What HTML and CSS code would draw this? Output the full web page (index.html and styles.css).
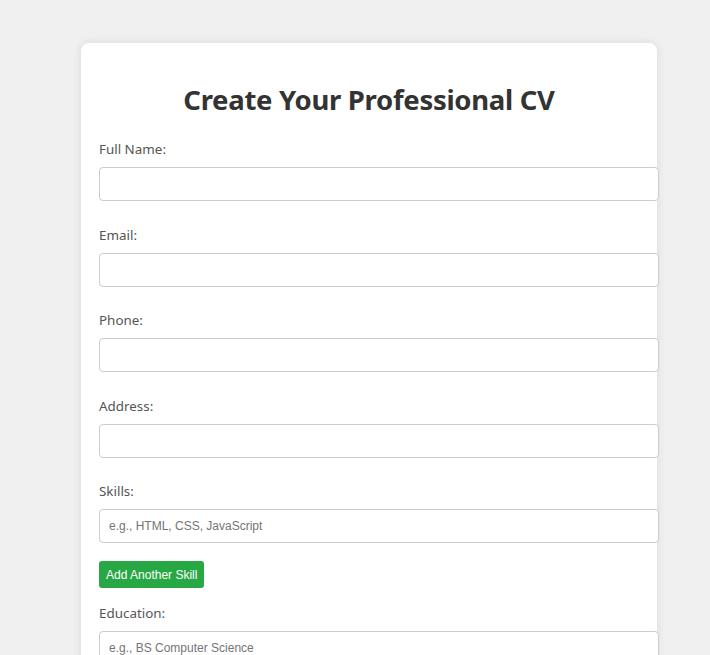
FILE: index.html
```html
<!DOCTYPE html>
<html>
<head>
<meta charset="utf-8">
<link rel="stylesheet" href="styles.css">
</head>
<body>
<div class="card">
  <h1 class="title">Create Your Professional CV</h1>
  <form class="form">
    <div class="field">
      <label class="label">Full Name:</label>
      <input class="input" type="text">
    </div>
    <div class="field">
      <label class="label">Email:</label>
      <input class="input" type="text">
    </div>
    <div class="field">
      <label class="label">Phone:</label>
      <input class="input" type="text">
    </div>
    <div class="field">
      <label class="label">Address:</label>
      <input class="input" type="text">
    </div>
    <div class="field field-tight">
      <label class="label">Skills:</label>
      <input class="input" type="text" placeholder="e.g., HTML, CSS, JavaScript">
    </div>
    <button class="btn" type="button">Add Another Skill</button>
    <div class="field">
      <label class="label">Education:</label>
      <input class="input" type="text" placeholder="e.g., BS Computer Science">
    </div>
  </form>
</div>
</body>
</html>
```
FILE: styles.css
```css
html, body {
  margin: 0;
  padding: 0;
}
body {
  background: #f0f0f0;
  font-family: "Noto Sans", "Open Sans", sans-serif;
  padding: 43px 0 40px 81px;
}
.card {
  width: 540px;
  padding: 20px 18px;
  background: #fff;
  border-radius: 8px;
  box-shadow: 0 0 10px rgba(0, 0, 0, 0.1);
}
.title {
  margin: 19px 0 22px;
  text-align: center;
  font-size: 27.5px;
  font-weight: 700;
  color: #333;
  line-height: 36px;
  letter-spacing: -0.3px;
}
.form {
  display: flex;
  flex-direction: column;
}
.field {
  display: flex;
  flex-direction: column;
  margin-bottom: 24.5px;
}
.field-tight {
  margin-bottom: 18px;
}
.label {
  font-size: 13.4px;
  line-height: 19px;
  color: #555;
  margin-bottom: 8px;
}
.input {
  box-sizing: content-box;
  width: 100%;
  height: 16px;
  padding: 8px 9px;
  border: 1px solid #ccc;
  border-radius: 4px;
  font-family: "Liberation Sans", Arial, sans-serif;
  font-size: 12px;
  margin: 0;
}
.input::placeholder {
  color: #757575;
}
.btn {
  align-self: flex-start;
  background: #28a745;
  color: #fff;
  border: none;
  border-radius: 3px;
  font-family: "Liberation Sans", Arial, sans-serif;
  font-size: 12px;
  font-weight: 400;
  height: 27px;
  padding: 0 7px;
  margin-bottom: 16px;
}
```
